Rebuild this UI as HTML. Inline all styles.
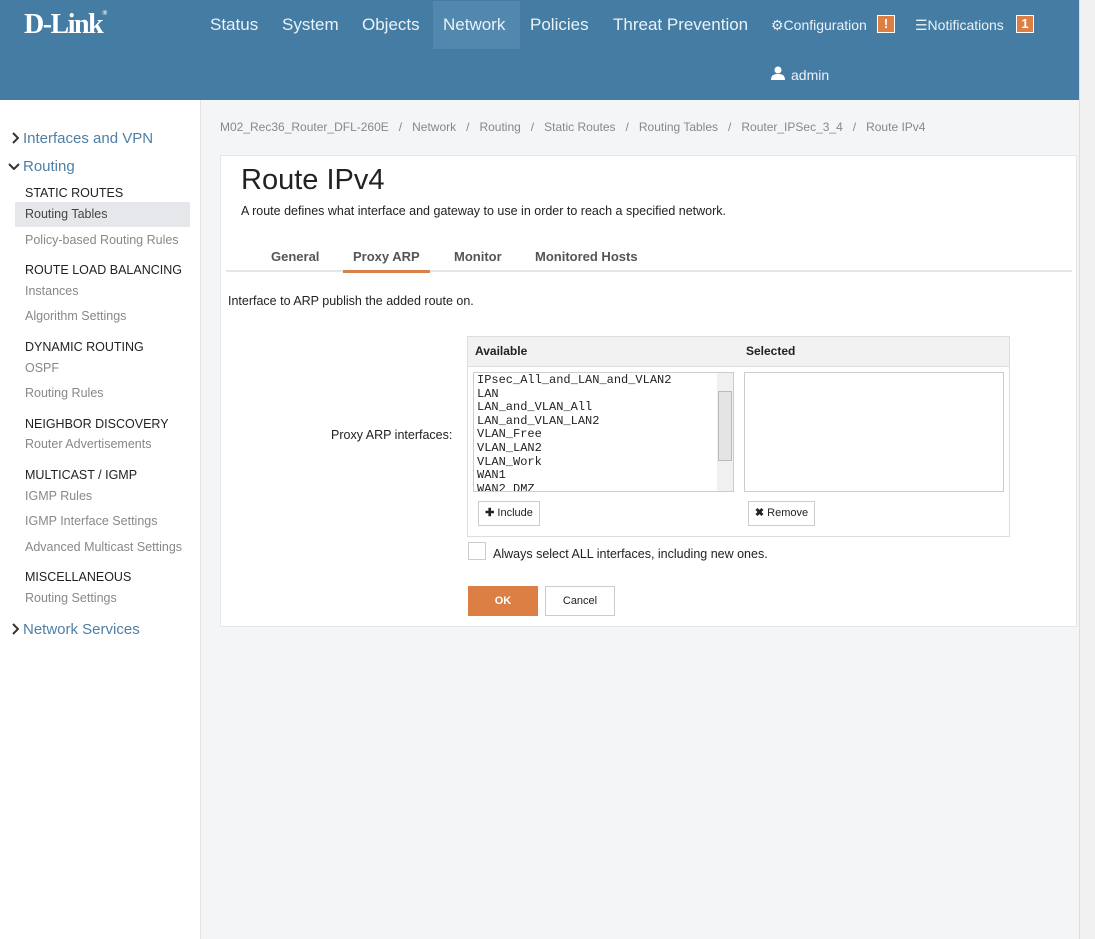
<!DOCTYPE html>
<html><head><meta charset="utf-8"><style>
*{margin:0;padding:0;box-sizing:border-box}
body{width:1095px;height:939px;overflow:hidden;position:relative;background:#f4f5f7;font-family:"Liberation Sans",sans-serif;color:#222}
.a{position:absolute;white-space:nowrap}
#hdr{position:absolute;left:0;top:0;width:1079px;height:100px;background:#457ca3}
.nav{color:#eaf2f8;font-size:17px;top:15px}
#sb{position:absolute;left:0;top:100px;width:201px;height:839px;background:#fff;border-right:1px solid #e2e2e2}
.sh{font-size:12.5px;color:#222;left:25px}
.si{font-size:12.5px;color:#888;left:25px}
.sg{font-size:15px;color:#4f7fa6;left:23px}
.bc{font-size:12px;color:#888;top:120px}
#card{position:absolute;left:220px;top:155px;width:857px;height:472px;background:#fff;border:1px solid #e6e6e6}
.tab{font-size:13px;font-weight:bold;color:#555;top:249px}
.mono{font-family:"Liberation Mono",monospace;font-size:12px;line-height:13.6px;color:#222}
.btn{position:absolute;border:1px solid #ccc;background:#fff;font-size:11px;color:#222;text-align:center}
.badge{position:absolute;width:18px;height:18px;background:#dc7f45;border:1px solid #fff;color:#fff;font-size:13px;font-weight:bold;text-align:center;line-height:16px}
</style></head><body>
<div id="hdr">
<div class="a" style="left:24px;top:9px;color:#fff;font-family:'Liberation Serif',serif;font-weight:bold;font-size:28px;letter-spacing:-1.5px">D-Link<span style="font-size:7px;vertical-align:top">®</span></div>
<div class="a" style="left:433px;top:1px;width:87px;height:48px;background:#5288ae"></div>
<div class="a nav" style="left:210px">Status</div>
<div class="a nav" style="left:282px">System</div>
<div class="a nav" style="left:362px">Objects</div>
<div class="a nav" style="left:443px">Network</div>
<div class="a nav" style="left:530px">Policies</div>
<div class="a nav" style="left:613px">Threat Prevention</div>
<div class="a nav" style="left:771px;top:17px;font-size:14px">⚙Configuration</div>
<div class="badge" style="left:877px;top:15px">!</div>
<div class="a nav" style="left:915px;top:17px;font-size:14px">☰Notifications</div>
<div class="badge" style="left:1016px;top:15px">1</div>
<svg class="a" style="left:771px;top:66px" width="14" height="14" viewBox="0 0 14 14"><circle cx="7" cy="4" r="3.5" fill="#fff"/><path d="M0 14c0-5 3-6 7-6s7 1 7 6z" fill="#fff"/></svg>
<div class="a nav" style="left:791px;top:67px;font-size:14px">admin</div>
</div>
<div class="a" style="left:1079px;top:0;width:16px;height:939px;background:#f0f0f0;border-left:1px solid #ddd"></div>
<div id="sb"></div>
<svg class="a" style="left:11px;top:132px" width="8" height="12" viewBox="0 0 8 12"><path d="M2 1l5 5-5 5" stroke="#333" stroke-width="2" fill="none"/></svg>
<div class="a sg" style="top:130px">Interfaces and VPN</div>
<svg class="a" style="left:8px;top:162px" width="12" height="8" viewBox="0 0 12 8"><path d="M1 2l5 5 5-5" stroke="#333" stroke-width="2" fill="none"/></svg>
<div class="a sg" style="top:158px">Routing</div>
<div class="a sh" style="top:186px">STATIC ROUTES</div>
<div class="a" style="left:15px;top:202px;width:175px;height:25px;background:#e6e7ea"></div>
<div class="a sh" style="top:207px;color:#444">Routing Tables</div>
<div class="a si" style="top:233px">Policy-based Routing Rules</div>
<div class="a sh" style="top:263px">ROUTE LOAD BALANCING</div>
<div class="a si" style="top:284px">Instances</div>
<div class="a si" style="top:309px">Algorithm Settings</div>
<div class="a sh" style="top:340px">DYNAMIC ROUTING</div>
<div class="a si" style="top:361px">OSPF</div>
<div class="a si" style="top:386px">Routing Rules</div>
<div class="a sh" style="top:417px">NEIGHBOR DISCOVERY</div>
<div class="a si" style="top:437px">Router Advertisements</div>
<div class="a sh" style="top:468px">MULTICAST / IGMP</div>
<div class="a si" style="top:489px">IGMP Rules</div>
<div class="a si" style="top:514px">IGMP Interface Settings</div>
<div class="a si" style="top:540px">Advanced Multicast Settings</div>
<div class="a sh" style="top:570px">MISCELLANEOUS</div>
<div class="a si" style="top:591px">Routing Settings</div>
<svg class="a" style="left:11px;top:623px" width="8" height="12" viewBox="0 0 8 12"><path d="M2 1l5 5-5 5" stroke="#333" stroke-width="2" fill="none"/></svg>
<div class="a sg" style="top:621px">Network Services</div>
<div class="a bc" style="left:220px">M02_Rec36_Router_DFL-260E &nbsp; / &nbsp; Network &nbsp; / &nbsp; Routing &nbsp; / &nbsp; Static Routes &nbsp; / &nbsp; Routing Tables &nbsp; / &nbsp; Router_IPSec_3_4 &nbsp; / &nbsp; Route IPv4</div>
<div id="card"></div>
<div class="a" style="left:241px;top:164px;font-size:29px;color:#222">Route IPv4</div>
<div class="a" style="left:241px;top:204px;font-size:12.5px">A route defines what interface and gateway to use in order to reach a specified network.</div>
<div class="a tab" style="left:271px">General</div>
<div class="a tab" style="left:353px">Proxy ARP</div>
<div class="a tab" style="left:454px">Monitor</div>
<div class="a tab" style="left:535px">Monitored Hosts</div>
<div class="a" style="left:226px;top:270px;width:846px;height:2px;background:#e6e6e6"></div>
<div class="a" style="left:343px;top:270px;width:87px;height:3px;background:#d9804d"></div>
<div class="a" style="left:228px;top:294px;font-size:12.5px">Interface to ARP publish the added route on.</div>
<div class="a" style="left:331px;top:428px;font-size:12.5px">Proxy ARP interfaces:</div>
<div class="a" style="left:467px;top:336px;width:543px;height:201px;border:1px solid #ddd;background:#fff"></div>
<div class="a" style="left:468px;top:337px;width:541px;height:30px;background:#f2f2f2;border-bottom:1px solid #ddd"></div>
<div class="a" style="left:475px;top:344px;font-size:12px;font-weight:bold">Available</div>
<div class="a" style="left:746px;top:344px;font-size:12px;font-weight:bold">Selected</div>
<div class="a" style="left:473px;top:372px;width:261px;height:120px;border:1px solid #ccc;overflow:hidden;background:#fff">
<div class="mono" style="padding:1px 0 0 3px">IPsec_All_and_LAN_and_VLAN2<br>LAN<br>LAN_and_VLAN_All<br>LAN_and_VLAN_LAN2<br>VLAN_Free<br>VLAN_LAN2<br>VLAN_Work<br>WAN1<br>WAN2_DMZ</div>
<div style="position:absolute;right:0;top:0;width:16px;height:118px;background:#f0f0f0"></div>
<div style="position:absolute;right:1px;top:18px;width:14px;height:70px;background:#e4e4e4;border:1px solid #bbb"></div>
</div>
<div class="a" style="left:744px;top:372px;width:260px;height:120px;border:1px solid #ccc;background:#fff"></div>
<div class="btn" style="left:478px;top:501px;width:62px;height:25px;line-height:23px"><b>✚</b> Include</div>
<div class="btn" style="left:748px;top:501px;width:67px;height:25px;line-height:23px"><b>✖</b> Remove</div>
<div class="a" style="left:468px;top:542px;width:18px;height:18px;border:1px solid #ccc;background:#fff"></div>
<div class="a" style="left:493px;top:547px;font-size:12.5px">Always select ALL interfaces, including new ones.</div>
<div class="a" style="left:468px;top:586px;width:70px;height:30px;background:#dc7f45;color:#fff;font-weight:bold;font-size:11px;text-align:center;line-height:30px">OK</div>
<div class="btn" style="left:545px;top:586px;width:70px;height:30px;line-height:28px">Cancel</div>
</body></html>
